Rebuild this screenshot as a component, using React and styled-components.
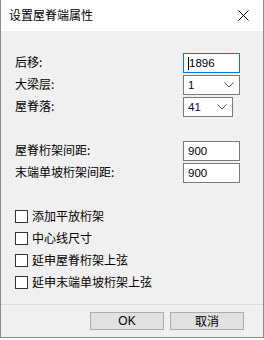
import React from "react";
import styled, { createGlobalStyle } from "styled-components";

const Global = createGlobalStyle`
  html, body { margin: 0; padding: 0; background: #ffffff; }
  body { font-family: "Noto Sans CJK SC", "Liberation Sans", sans-serif; font-size: 12px; color: #000; }
  * { box-sizing: border-box; }
`;

const Window = styled.div`
  width: 264px;
  height: 338px;
  display: flex;
  flex-direction: column;
  border: 1px solid #8a8a8a;
  border-top: none;
  background: #f0f0f0;
`;

const TitleBar = styled.div`
  height: 31px;
  flex: none;
  background: #ffffff;
  display: flex;
  align-items: center;
  justify-content: space-between;
  padding: 0 8px 0 8px;
`;

const Title = styled.span`
  font-size: 12px;
  line-height: 1;
  margin-top: -1px;
`;

const CloseBtn = styled.div`
  width: 24px;
  height: 20px;
  display: flex;
  align-items: center;
  justify-content: center;
  margin-top: -1px;
  svg { display: block; }
`;

const Content = styled.div`
  flex: 1;
  display: flex;
  flex-direction: column;
  padding: 22px 23px 0 14px;
`;

const Group = styled.div`
  display: flex;
  flex-direction: column;
  gap: 2px;
  margin-bottom: ${(p) => p.$after}px;
`;

const Row = styled.div`
  display: flex;
  align-items: center;
  height: 20px;
`;

const Label = styled.span`
  flex: 1;
  font-size: 12px;
  line-height: 1;
  margin-top: -2px;
`;

const ControlSlot = styled.div`
  width: 57px;
  display: flex;
`;

const TextBox = styled.div`
  width: 57px;
  height: 20px;
  background: #fff;
  border: 1px solid ${(p) => (p.$focused ? "#0078d7" : "#7a7a7a")};
  display: flex;
  align-items: center;
  padding-left: 4px;
  font-family: "Liberation Sans", Arial, sans-serif;
  font-size: 11.5px;
  color: #000;
`;

const Caret = styled.span`
  width: 1px;
  height: 13px;
  background: #000;
  margin-right: 0px;
`;

const Select = styled.div`
  width: ${(p) => p.$w}px;
  height: 20px;
  background: #fff;
  border: 1px solid #7a7a7a;
  display: flex;
  align-items: center;
  justify-content: space-between;
  padding: 0 5px 0 4px;
  font-family: "Liberation Sans", Arial, sans-serif;
  font-size: 11.5px;
  color: #1a0030;
  svg { display: block; }
`;

const CheckList = styled.div`
  display: flex;
  flex-direction: column;
`;

const CheckRow = styled.div`
  display: flex;
  align-items: center;
  height: 22px;
  gap: 4px;
`;

const Box = styled.span`
  width: 13px;
  height: 13px;
  border: 1px solid #333;
  background: #fff;
  flex: none;
`;

const CheckText = styled.span`
  font-size: 12px;
  line-height: 1;
  margin-top: -1px;
`;

const Footer = styled.div`
  flex: none;
  border-top: 1px solid #dcdcdc;
  padding: 7px 19px 7px 0;
  display: flex;
  justify-content: flex-end;
  gap: 6px;
`;

const Button = styled.div`
  width: 74px;
  height: 18px;
  background: #e1e1e1;
  border: 1px solid #adadad;
  display: flex;
  align-items: center;
  justify-content: center;
  font-family: ${(p) => (p.$latin ? '"Liberation Sans", Arial, sans-serif' : '"Noto Sans CJK SC", sans-serif')};
  font-size: 12px;
  line-height: 1;
`;

const Chevron = () => (
  <svg width="10" height="6" viewBox="0 0 10 6">
    <path d="M0.5 0.5 L5 5 L9.5 0.5" fill="none" stroke="#555" strokeWidth="1" />
  </svg>
);

const fields1 = [
  { label: "后移:", kind: "text", value: "1896", focused: true },
  { label: "大梁层:", kind: "select", value: "1", w: 57 },
  { label: "屋脊落:", kind: "select", value: "41", w: 50 },
];

const fields2 = [
  { label: "屋脊桁架间距:", kind: "text", value: "900" },
  { label: "末端单坡桁架间距:", kind: "text", value: "900" },
];

const checks = ["添加平放桁架", "中心线尺寸", "延申屋脊桁架上弦", "延申末端单坡桁架上弦"];

function Field({ f }) {
  return (
    <Row>
      <Label>{f.label}</Label>
      <ControlSlot>
        {f.kind === "text" ? (
          <TextBox $focused={f.focused}>
            {f.focused && <Caret />}
            {f.value}
          </TextBox>
        ) : (
          <Select $w={f.w}>
            <span>{f.value}</span>
            <Chevron />
          </Select>
        )}
      </ControlSlot>
    </Row>
  );
}

export default function App() {
  return (
    <>
      <Global />
      <Window>
        <TitleBar>
          <Title>设置屋脊端属性</Title>
          <CloseBtn>
            <svg width="11" height="11" viewBox="0 0 11 11">
              <path d="M0.5 0.5 L10.5 10.5 M10.5 0.5 L0.5 10.5" stroke="#000" strokeWidth="1" />
            </svg>
          </CloseBtn>
        </TitleBar>
        <Content>
          <Group $after={24}>
            {fields1.map((f) => (
              <Field key={f.label} f={f} />
            ))}
          </Group>
          <Group $after={22}>
            {fields2.map((f) => (
              <Field key={f.label} f={f} />
            ))}
          </Group>
          <CheckList>
            {checks.map((c) => (
              <CheckRow key={c}>
                <Box />
                <CheckText>{c}</CheckText>
              </CheckRow>
            ))}
          </CheckList>
        </Content>
        <Footer>
          <Button $latin>OK</Button>
          <Button>取消</Button>
        </Footer>
      </Window>
    </>
  );
}
